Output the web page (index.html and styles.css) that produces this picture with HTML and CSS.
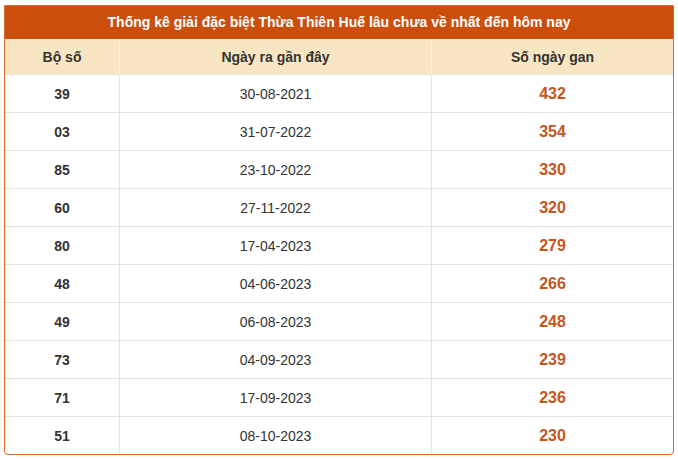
FILE: index.html
```html
<!DOCTYPE html>
<html lang="vi">
<head>
<meta charset="utf-8">
<link rel="stylesheet" href="styles.css">
</head>
<body>
<div class="box">
  <div class="title">Thống kê giải đặc biệt Thừa Thiên Huế lâu chưa về nhất đến hôm nay</div>
  <table class="gan">
    <thead>
      <tr><th class="c1">Bộ số</th><th class="c2">Ngày ra gần đây</th><th class="c3">Số ngày gan</th></tr>
    </thead>
    <tbody>
      <tr><td class="num">39</td><td>30-08-2021</td><td class="days">432</td></tr>
      <tr><td class="num">03</td><td>31-07-2022</td><td class="days">354</td></tr>
      <tr><td class="num">85</td><td>23-10-2022</td><td class="days">330</td></tr>
      <tr><td class="num">60</td><td>27-11-2022</td><td class="days">320</td></tr>
      <tr><td class="num">80</td><td>17-04-2023</td><td class="days">279</td></tr>
      <tr><td class="num">48</td><td>04-06-2023</td><td class="days">266</td></tr>
      <tr><td class="num">49</td><td>06-08-2023</td><td class="days">248</td></tr>
      <tr><td class="num">73</td><td>04-09-2023</td><td class="days">239</td></tr>
      <tr><td class="num">71</td><td>17-09-2023</td><td class="days">236</td></tr>
      <tr><td class="num">51</td><td>08-10-2023</td><td class="days">230</td></tr>
    </tbody>
  </table>
</div>
</body>
</html>
```
FILE: styles.css
```css
html, body {
  margin: 0;
  padding: 0;
  background: #fff;
}
body {
  font-family: "Liberation Sans", Arial, sans-serif;
  color: #333;
  padding: 5px 4px 0 4px;
}
.box {
  width: 668px;
  border: 1px solid #d8692a;
  border-radius: 0 0 4px 4px;
  overflow: hidden;
}
.title {
  background: #cc4e0c;
  color: #fff;
  font-weight: bold;
  font-size: 14px;
  height: 33px;
  line-height: 33px;
  text-align: center;
}
.gan {
  width: 100%;
  border-collapse: collapse;
  table-layout: fixed;
}
.gan th {
  background: #f8e6c2;
  font-size: 14px;
  font-weight: bold;
  color: #333;
  height: 35px;
  padding: 0;
  text-align: center;
  border-left: 1px solid #f3f3f3;
}
.gan th.c1 { width: 114px; border-left: 0; }
.gan th.c2 { width: 311px; }
.gan td {
  height: 37px;
  padding: 0;
  text-align: center;
  font-size: 14px;
  color: #333;
  border-top: 1px solid #e2e2e2;
  border-left: 1px solid #e2e2e2;
}
.gan td:first-child { border-left: 0; }
.gan td.num { font-weight: bold; }
.gan td.days {
  font-size: 16px;
  font-weight: bold;
  color: #c4561c;
}
```
